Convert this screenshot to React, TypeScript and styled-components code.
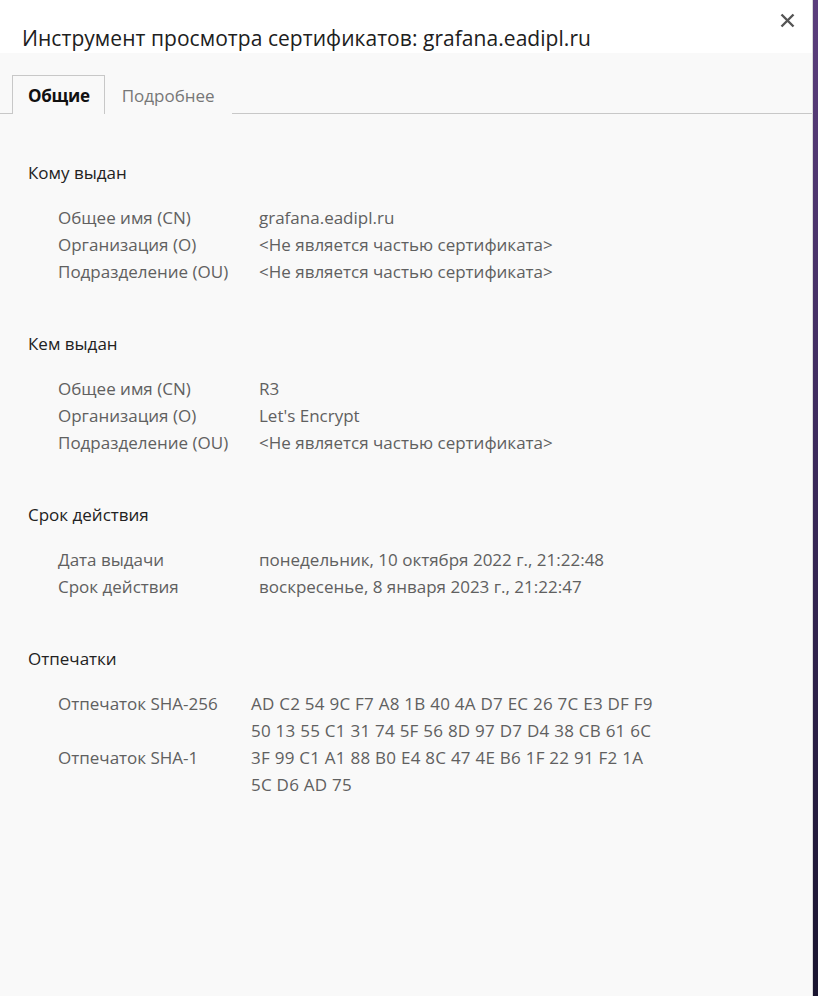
import React from "react";
import styled, { createGlobalStyle } from "styled-components";

const Global = createGlobalStyle`
  html, body { margin: 0; padding: 0; }
  body {
    width: 818px;
    height: 996px;
    overflow: hidden;
    background: linear-gradient(180deg, #5b3e7c 0%, #3c2a5c 45%, #1a1530 100%);
    font-family: "Open Sans", "Noto Sans", sans-serif;
  }
`;

const Dialog = styled.div`
  width: 812px;
  height: 996px;
  background: #f9f9f9;
  border-right: 1px solid #d8d8d8;
  display: flex;
  flex-direction: column;
`;

const Header = styled.div`
  height: 53px;
  background: #ffffff;
  position: relative;
  display: flex;
  align-items: flex-start;
  padding: 22px 0 0 22px;
  box-sizing: border-box;
`;

const Title = styled.h1`
  margin: 0;
  font-size: 21px;
  font-weight: 400;
  color: #202020;
  line-height: 32px;
  letter-spacing: 0.05px;
`;

const Close = styled.button`
  position: absolute;
  top: 9px;
  right: 14px;
  width: 22px;
  height: 22px;
  border: 0;
  padding: 0;
  background: transparent;
  display: flex;
  align-items: center;
  justify-content: center;
`;

const Tabs = styled.div`
  display: flex;
  margin-top: 22px;
  padding-left: 12px;
  border-bottom: 1px solid #c8c8c8;
  height: 38px;
`;

const Tab = styled.div<{ $active?: boolean }>`
  box-sizing: border-box;
  height: 39px;
  padding: 0 ${(p) => (p.$active ? "14px 0 15px" : "16px")};
  display: flex;
  align-items: center;
  font-size: 17px;
  font-weight: ${(p) => (p.$active ? 700 : 400)};
  color: ${(p) => (p.$active ? "#111" : "#777")};
  background: #f9f9f9;
  border: 1px solid ${(p) => (p.$active ? "#c8c8c8" : "transparent")};
  border-bottom: 0;
  letter-spacing: ${(p) => (p.$active ? "-0.3px" : "0")};
`;

const Content = styled.div`
  padding: 45px 0 0 28px;
  display: flex;
  flex-direction: column;
`;

const Section = styled.section`
  margin-bottom: 45px;
`;

const SectionTitle = styled.h2`
  margin: 0 0 18px;
  font-size: 17px;
  font-weight: 400;
  color: #222;
  line-height: 27px;
`;

const Rows = styled.div<{ $valueX: number }>`
  display: grid;
  grid-template-columns: ${(p) => p.$valueX}px 1fr;
  padding-left: 30px;
`;

const Label = styled.div`
  font-size: 17px;
  line-height: 27px;
  color: #606060;
`;

const Value = styled.div<{ $hex?: boolean }>`
  font-size: 17px;
  line-height: 27px;
  color: #606060;
  display: flex;
  flex-direction: column;
  letter-spacing: ${(p) => (p.$hex ? "0.25px" : "0")};
`;

type Row = [string, string[]];
const NOT = "<Не является частью сертификата>";

const sections: { title: string; valueX: number; hex?: boolean; rows: Row[] }[] = [
  {
    title: "Кому выдан",
    valueX: 201,
    rows: [
      ["Общее имя (CN)", ["grafana.eadipl.ru"]],
      ["Организация (O)", [NOT]],
      ["Подразделение (OU)", [NOT]],
    ],
  },
  {
    title: "Кем выдан",
    valueX: 201,
    rows: [
      ["Общее имя (CN)", ["R3"]],
      ["Организация (O)", ["Let's Encrypt"]],
      ["Подразделение (OU)", [NOT]],
    ],
  },
  {
    title: "Срок действия",
    valueX: 201,
    rows: [
      ["Дата выдачи", ["понедельник, 10 октября 2022 г., 21:22:48"]],
      ["Срок действия", ["воскресенье, 8 января 2023 г., 21:22:47"]],
    ],
  },
  {
    title: "Отпечатки",
    valueX: 193,
    hex: true,
    rows: [
      [
        "Отпечаток SHA-256",
        [
          "AD C2 54 9C F7 A8 1B 40 4A D7 EC 26 7C E3 DF F9",
          "50 13 55 C1 31 74 5F 56 8D 97 D7 D4 38 CB 61 6C",
        ],
      ],
      ["Отпечаток SHA-1", ["3F 99 C1 A1 88 B0 E4 8C 47 4E B6 1F 22 91 F2 1A", "5C D6 AD 75"]],
    ],
  },
];

export default function App() {
  return (
    <>
      <Global />
      <Dialog>
        <Header>
          <Title>Инструмент просмотра сертификатов: grafana.eadipl.ru</Title>
          <Close aria-label="Закрыть">
            <svg width="15" height="15" viewBox="0 0 15 15">
              <path d="M1.5 1.5 L13.5 13.5 M13.5 1.5 L1.5 13.5" stroke="#555" strokeWidth="2.4" />
            </svg>
          </Close>
        </Header>
        <Tabs>
          <Tab $active>Общие</Tab>
          <Tab>Подробнее</Tab>
        </Tabs>
        <Content>
          {sections.map((s) => (
            <Section key={s.title}>
              <SectionTitle>{s.title}</SectionTitle>
              <Rows $valueX={s.valueX}>
                {s.rows.map(([l, v]) => (
                  <React.Fragment key={l}>
                    <Label>{l}</Label>
                    <Value $hex={s.hex}>
                      {v.map((line) => (
                        <span key={line}>{line}</span>
                      ))}
                    </Value>
                  </React.Fragment>
                ))}
              </Rows>
            </Section>
          ))}
        </Content>
      </Dialog>
    </>
  );
}
